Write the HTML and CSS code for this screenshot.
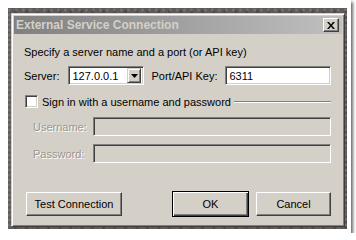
FILE: index.html
```html
<!DOCTYPE html>
<html>
<head>
<meta charset="utf-8">
<link rel="stylesheet" href="styles.css">
</head>
<body>
<div class="frame">
  <div class="stone">
    <div class="dialog">
      <div class="titlebar">
        <span class="title">External Service Connection</span>
        <span class="close"><svg width="8" height="7" viewBox="0 0 8 7"><path d="M0 0h2l2 2.5L6 0h2L5 3.5 8 7H6L4 4.5 2 7H0l3-3.5z" fill="#000"/></svg></span>
      </div>
      <div class="content">
        <div class="intro">Specify a server name and a port (or API key)</div>
        <div class="server-row">
          <span class="label">Server:</span>
          <div class="combo">
            <span class="combo-text">127.0.0.1</span>
            <span class="combo-btn"><svg width="7" height="4" viewBox="0 0 7 4"><path d="M0 0h7L3.5 4z" fill="#000"/></svg></span>
          </div>
          <span class="label port-label">Port/API Key:</span>
          <div class="field white">6311</div>
        </div>
        <div class="check-row">
          <span class="checkbox"></span>
          <span class="check-text">Sign in with a username and password</span>
          <span class="etch"></span>
        </div>
        <div class="cred-row first">
          <span class="label disabled">Username:</span>
          <div class="field grey"></div>
        </div>
        <div class="cred-row">
          <span class="label disabled">Password:</span>
          <div class="field grey"></div>
        </div>
        <div class="buttons">
          <button class="btn test">Test Connection</button>
          <span class="spacer"></span>
          <button class="btn ok">OK</button>
          <button class="btn cancel">Cancel</button>
        </div>
      </div>
    </div>
  </div>
</div>
</body>
</html>
```
FILE: styles.css
```css
html, body {
  margin: 0;
  padding: 0;
  background: #fff;
}
body {
  font-family: "Liberation Sans", Arial, sans-serif;
  font-size: 11px;
  color: #000;
}
.frame {
  box-sizing: border-box;
  width: 351px;
  height: 233px;
  background: #fff;
  padding: 8px 4px 4px 8px;
  display: flex;
  box-shadow: 2px 2px 3px rgba(0,0,0,0.6);
}
.stone {
  flex: 1;
  display: flex;
  padding: 5px 2px 2px 3px;
  background-color: #5f5a58;
  background-image:
    radial-gradient(circle at 20% 40%, rgba(255,255,255,0.14) 0 1px, transparent 2px),
    radial-gradient(circle at 70% 60%, rgba(0,0,0,0.2) 0 1px, transparent 2px);
  background-size: 7px 5px, 11px 6px;
}
.dialog {
  flex: 1;
  display: flex;
  flex-direction: column;
  background: #d4d0c8;
  border: 1px solid;
  border-color: #d4d0c8 #404040 #404040 #d4d0c8;
  box-shadow: inset 1px 1px #fff, inset -1px -1px #808080;
  padding: 2px;
}
.titlebar {
  height: 18px;
  display: flex;
  align-items: center;
  background: linear-gradient(to right, #808080, #c0c0c0);
  padding: 0 3px 0 2px;
}
.title {
  flex: 1;
  font-weight: bold;
  color: #d4d0c8;
  font-size: 12px;
}
.close {
  box-sizing: border-box;
  width: 16px;
  height: 14px;
  background: #d4d0c8;
  border: 1px solid;
  border-color: #fff #404040 #404040 #fff;
  box-shadow: inset -1px -1px #808080;
  display: flex;
  align-items: center;
  justify-content: center;
}
.content {
  flex: 1;
  display: flex;
  flex-direction: column;
  padding: 12px 11px 7px 10px;
}
.intro {
  line-height: 13px;
}
.server-row {
  display: flex;
  align-items: center;
  margin-top: 7px;
  height: 19px;
}
.label {
  white-space: nowrap;
}
.combo {
  box-sizing: border-box;
  width: 76px;
  height: 19px;
  margin-left: 9px;
  background: #fff;
  border: 1px solid;
  border-color: #808080 #fff #fff #808080;
  box-shadow: inset 1px 1px #404040, inset -1px -1px #d4d0c8;
  display: flex;
  align-items: center;
  padding: 2px;
}
.combo-text {
  flex: 1;
  padding-left: 1px;
}
.combo-btn {
  box-sizing: border-box;
  width: 14px;
  height: 15px;
  background: #d4d0c8;
  border: 1px solid;
  border-color: #d4d0c8 #404040 #404040 #d4d0c8;
  box-shadow: inset 1px 1px #fff, inset -1px -1px #808080;
  display: flex;
  align-items: center;
  justify-content: center;
}
.port-label {
  margin-left: 7px;
}
.field {
  box-sizing: border-box;
  height: 19px;
  flex: 1;
  border: 1px solid;
  border-color: #808080 #fff #fff #808080;
  box-shadow: inset 1px 1px #404040, inset -1px -1px #d4d0c8;
  padding: 0 4px;
  display: flex;
  align-items: center;
}
.field.white {
  background: #fff;
  margin-left: 7px;
}
.field.grey {
  background: #d4d0c8;
}
.check-row {
  display: flex;
  align-items: center;
  margin-top: 10px;
  height: 13px;
}
.checkbox {
  box-sizing: border-box;
  width: 13px;
  height: 13px;
  margin-left: 1px;
  background: #fff;
  border: 1px solid;
  border-color: #808080 #fff #fff #808080;
  box-shadow: inset 1px 1px #404040, inset -1px -1px #d4d0c8;
}
.check-text {
  margin-left: 4px;
  white-space: nowrap;
}
.etch {
  flex: 1;
  height: 0;
  border-top: 1px solid #808080;
  border-bottom: 1px solid #fff;
  margin-left: 3px;
}
.cred-row {
  display: flex;
  align-items: center;
  height: 19px;
  margin-top: 8px;
  padding-left: 9px;
}
.cred-row.first {
  margin-top: 9px;
}
.cred-row .label {
  width: 60px;
}
.disabled {
  color: #999590;
  text-shadow: 1px 1px #fff;
}
.buttons {
  display: flex;
  align-items: center;
  margin-top: auto;
  padding-left: 2px;
}
.spacer {
  flex: 1;
}
.btn {
  box-sizing: border-box;
  height: 24px;
  font: inherit;
  color: #000;
  background: #d4d0c8;
  border: 1px solid;
  border-color: #fff #404040 #404040 #fff;
  box-shadow: inset -1px -1px #808080;
  padding: 0;
}
.btn.test {
  width: 96px;
}
.btn.ok {
  width: 77px;
  height: 26px;
  border: 1px solid #000;
  box-shadow: inset 1px 1px #fff, inset -1px -1px #404040, inset -2px -2px #808080;
}
.btn.cancel {
  width: 75px;
  margin-left: 7px;
}
```
